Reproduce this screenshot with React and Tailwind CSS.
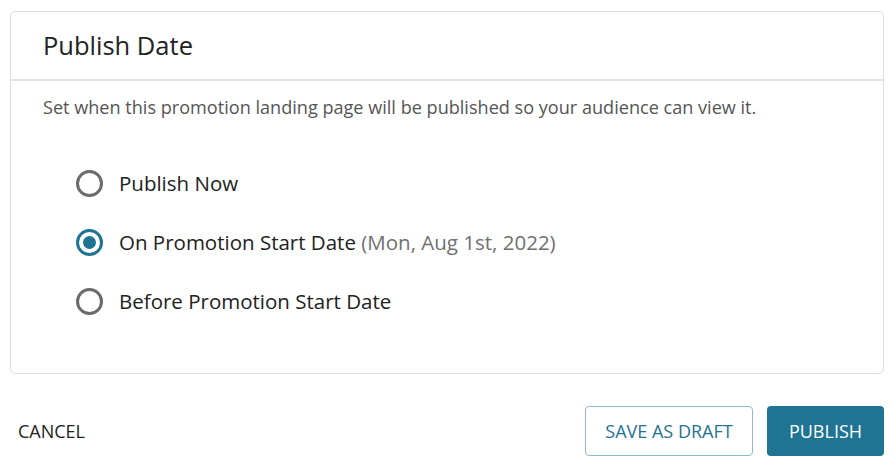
export default function App() {
  const options = [
    { label: "Publish Now", checked: false },
    { label: "On Promotion Start Date", extra: "(Mon, Aug 1st, 2022)", checked: true },
    { label: "Before Promotion Start Date", checked: false },
  ];
  return (
    <div className="w-[894px] h-[474px] bg-white pt-[11px] px-[10px] text-[#222]" style={{ fontFamily: '"Open Sans", "Lato", sans-serif' }}>
      <div className="border border-[#dedede] rounded-[5px] h-[363px] flex flex-col">
        <div className="h-[69px] flex items-center px-[32px] border-b-2 border-[#e2e2e2]">
          <h1 className="text-[25.5px] text-[#222]">Publish Date</h1>
        </div>
        <p className="px-[32px] pt-[13px] text-[18.1px] text-[#555]">Set when this promotion landing page will be published so your audience can view it.</p>
        <div className="flex flex-col gap-[33px] pl-[65px] pt-[49px]">
          {options.map((o) => (
            <label key={o.label} className="flex items-center gap-[16px] h-[26px]">
              {o.checked ? (
                <span className="w-[27px] h-[27px] rounded-full border-[3px] border-[#1f7393] flex items-center justify-center">
                  <span className="w-[13px] h-[13px] rounded-full bg-[#1f7393]" />
                </span>
              ) : (
                <span className="w-[27px] h-[27px] rounded-full border-[3px] border-[#6b6b6b]" />
              )}
              <span className="text-[20.5px] text-[#222]">
                {o.label}
                {o.extra && <span className="text-[#707070]"> {o.extra}</span>}
              </span>
            </label>
          ))}
        </div>
      </div>
      <div className="flex items-center justify-between mt-[32px]">
        <button className="text-[18px] text-[#222] pl-[8px]">CANCEL</button>
        <div className="flex gap-[14px]">
          <button className="h-[50px] w-[168px] border border-[#8fbccd] rounded-[4px] text-[18px] text-[#1f7393]">SAVE AS DRAFT</button>
          <button className="h-[50px] w-[117px] rounded-[4px] bg-[#1f7393] text-[18px] text-white">PUBLISH</button>
        </div>
      </div>
    </div>
  );
}
